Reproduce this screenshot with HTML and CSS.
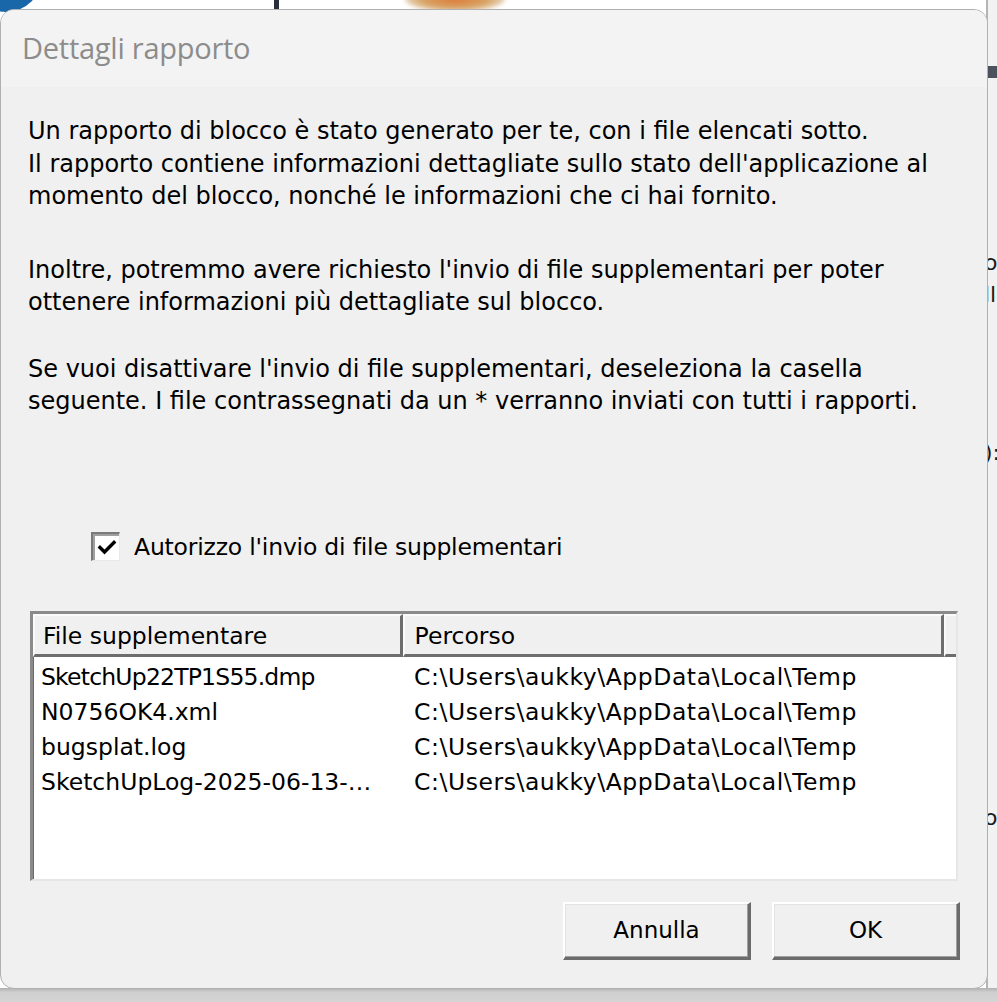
FILE: index.html
```html
<!DOCTYPE html>
<html lang="it">
<head>
<meta charset="utf-8">
<title>Dettagli rapporto</title>
<link rel="stylesheet" href="styles.css">
</head>
<body>
<div class="desktop">
  <div class="bg-circle"></div>
  <div class="bg-line"></div>
  <div class="bg-blob"></div>
  <div class="bg-right">
    <div class="bg-band"></div>
    <span class="frag f1">or</span>
    <span class="frag f2">lle</span>
    <span class="frag f3">):</span>
    <span class="frag f4">o</span>
  </div>
  <div class="bg-bottom"></div>

  <div class="dialog">
    <div class="titlebar">Dettagli rapporto</div>
    <div class="content">
      <p class="para p1">Un rapporto di blocco è stato generato per te, con i file elencati sotto.<br>Il rapporto contiene informazioni dettagliate sullo stato dell'applicazione al<br>momento del blocco, nonché le informazioni che ci hai fornito.</p>
      <p class="para p2">Inoltre, potremmo avere richiesto l'invio di file supplementari per poter<br>ottenere informazioni più dettagliate sul blocco.</p>
      <p class="para p3">Se vuoi disattivare l'invio di file supplementari, deseleziona la casella<br>seguente. I file contrassegnati da un * verranno inviati con tutti i rapporti.</p>

      <label class="check">
        <span class="box"><svg width="20" height="20" viewBox="0 0 20 20"><path d="M3 9.5 L7.5 14 L17 4.5" fill="none" stroke="#000" stroke-width="3.4" stroke-linecap="square"/></svg></span>
        <span class="check-label">Autorizzo l'invio di file supplementari</span>
      </label>

      <div class="listbox">
        <div class="lv-header">
          <div class="hcell c1">File supplementare</div>
          <div class="hcell c2">Percorso</div>
          <div class="hcell c3"></div>
        </div>
        <div class="lv-body">
          <div class="row"><span class="c1t tight">SketchUp22TP1S55.dmp</span><span class="c2t">C:\Users\aukky\AppData\Local\Temp</span></div>
          <div class="row"><span class="c1t">N0756OK4.xml</span><span class="c2t">C:\Users\aukky\AppData\Local\Temp</span></div>
          <div class="row"><span class="c1t">bugsplat.log</span><span class="c2t">C:\Users\aukky\AppData\Local\Temp</span></div>
          <div class="row"><span class="c1t">SketchUpLog-2025-06-13-…</span><span class="c2t">C:\Users\aukky\AppData\Local\Temp</span></div>
        </div>
      </div>

      <div class="buttons">
        <button class="btn">Annulla</button>
        <button class="btn">OK</button>
      </div>
    </div>
  </div>
</div>
</body>
</html>
```

FILE: styles.css
```css
* { box-sizing: border-box; }
html, body { margin: 0; padding: 0; }
body {
  width: 997px;
  height: 1002px;
  overflow: hidden;
  background: #ffffff;
  font-family: "DejaVu Sans", Tahoma, sans-serif;
}
.desktop {
  position: relative;
  width: 997px;
  height: 1002px;
  background: #ffffff;
}
.bg-circle {
  position: absolute;
  left: -30px;
  top: -60px;
  width: 72px;
  height: 72px;
  border-radius: 50%;
  background: #1967a9;
}
.bg-line {
  position: absolute;
  left: 274px;
  top: 0;
  width: 5px;
  height: 12px;
  background: #2a2e3a;
}
.bg-blob {
  position: absolute;
  left: 405px;
  top: -14px;
  width: 100px;
  height: 26px;
  border-radius: 50%;
  background: radial-gradient(ellipse at center, #e07a3a 0%, #d6a060 45%, #e9dcc6 75%, rgba(255,255,255,0) 100%);
  filter: blur(2px);
}
.bg-right {
  position: absolute;
  left: 986px;
  top: 0;
  width: 11px;
  height: 1002px;
  background: #f2f2f2;
  border-left: 2px solid #b4b4b4;
  overflow: hidden;
}
.bg-band {
  position: absolute;
  left: 0;
  top: 66px;
  width: 11px;
  height: 12px;
  background: #4b525b;
}
.frag {
  position: absolute;
  left: -4px;
  font-size: 22px;
  color: #1a1a1a;
}
.f1 { top: 250px; }
.f2 { top: 282px; }
.f3 { top: 440px; }
.f4 { top: 805px; }
.bg-bottom {
  position: absolute;
  left: 0;
  top: 988px;
  width: 997px;
  height: 14px;
  background: linear-gradient(#b0b0b0, #cfcfcf 30%, #d4d4d4);
}

.dialog {
  position: absolute;
  left: 0;
  top: 9px;
  width: 988px;
  height: 980px;
  background: #f0f0f0;
  border: 1px solid #b0b0b0;
  border-radius: 14px;
  overflow: hidden;
  display: flex;
  flex-direction: column;
}
.titlebar {
  height: 77px;
  flex: none;
  background: #f3f3f3;
  padding: 18px 0 0 21px;
  font-family: "Open Sans", "Noto Sans", sans-serif;
  font-size: 29px;
  font-weight: 400;
  color: #8c8c8c;
  letter-spacing: -0.25px;
  line-height: 40px;
}
.content {
  flex: 1;
  padding: 28px 27px 0 27px;
  display: flex;
  flex-direction: column;
  font-size: 23.5px;
  color: #000;
}
.para {
  margin: 0;
  font-size: 24px;
  line-height: 32.5px;
  white-space: nowrap;
}
.p2 { margin-top: 41px; }
.p3 { margin-top: 34px; }

.check {
  display: flex;
  align-items: center;
  gap: 14px;
  margin: 113px 0 0 63px;
  height: 32px;
}
.check-label { letter-spacing: -0.2px; }
.box {
  width: 29px;
  height: 29px;
  background: #fff;
  border-style: solid;
  border-width: 2px 1px 1px 2px;
  border-color: #7a7a7a #e8e8e8 #e8e8e8 #7a7a7a;
  box-shadow: inset 2px 2px 0 #a0a0a0;
  display: flex;
  align-items: center;
  justify-content: center;
}
.box svg { display: block; margin: 2px 0 0 2px; }

.listbox {
  margin: 48px 0 0 2px;
  width: 928px;
  height: 270px;
  background: #fff;
  border-style: solid;
  border-width: 3px 2px 2px 3px;
  border-color: #8a8a8a #e6e6e6 #e6e6e6 #8a8a8a;
  box-shadow: inset 1px 1px 0 #6b6b6b;
  display: flex;
  flex-direction: column;
}
.lv-header {
  display: flex;
  height: 43px;
  flex: none;
}
.hcell {
  height: 43px;
  background: #f0f0f0;
  border-style: solid;
  border-width: 2px 3px 3px 2px;
  border-color: #fafafa #6d6d6d #6d6d6d #fafafa;
  padding: 5px 0 0 8px;
  line-height: 30px;
  white-space: nowrap;
}
.hcell.c1 { width: 370px; }
.hcell.c2 { width: 542px; padding-left: 10px; }
.hcell.c3 { width: 12px; border-right: 0; }
.lv-body {
  padding: 3px 0 0 8px;
}
.row {
  display: flex;
  height: 35px;
  line-height: 35px;
}
.c1t { width: 373px; white-space: nowrap; }
.c1t.tight { letter-spacing: -0.8px; }
.c2t { white-space: nowrap; letter-spacing: 0.55px; }

.buttons {
  display: flex;
  justify-content: flex-end;
  gap: 21px;
  margin: 21px 0 0 0;
}
.btn {
  width: 188px;
  height: 58px;
  font-family: "DejaVu Sans", Tahoma, sans-serif;
  font-size: 23px;
  color: #000;
  background: #f0f0f0;
  border-style: solid;
  border-width: 2px 3px 3px 2px;
  border-color: #ffffff #6b6b6b #6b6b6b #ffffff;
  box-shadow: inset -1px -1px 0 #a0a0a0, inset 1px 1px 0 #e3e3e3;
  padding: 0;
}
```
